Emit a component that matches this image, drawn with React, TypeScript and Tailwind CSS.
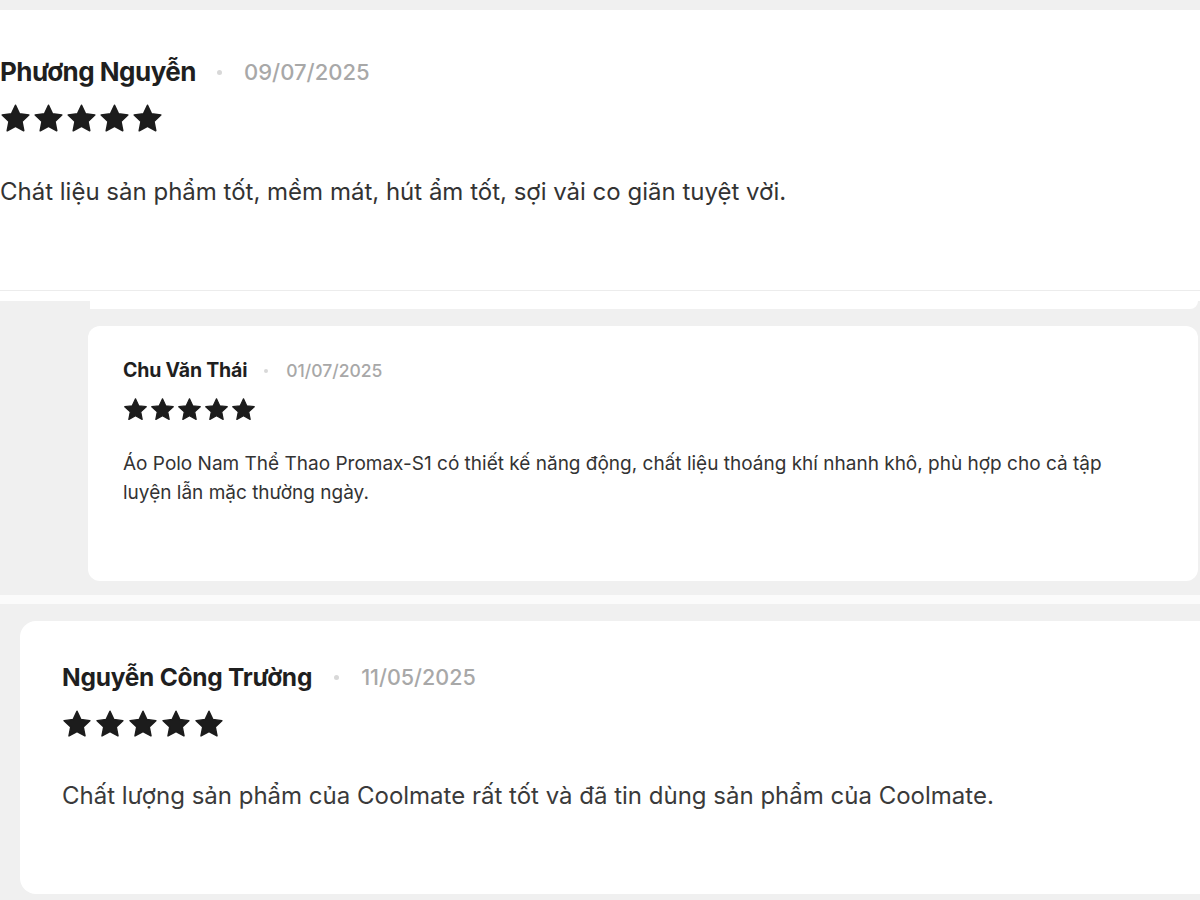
import React from "react";

const Star = ({ size }: { size: number }) => (
  <svg width={size} height={size} viewBox="0 0 24 24" className="shrink-0">
    <path
      d="M12 1.8l3.1 6.6 7.2.9-5.3 5 1.4 7.2L12 18l-6.4 3.5L7 14.3l-5.3-5 7.2-.9z"
      fill="#1c1c1c"
      stroke="#1c1c1c"
      strokeWidth="1.2"
      strokeLinejoin="round"
    />
  </svg>
);

const Stars = ({ size, gap }: { size: number; gap: string }) => (
  <div className={`flex ${gap}`}>
    {[0, 1, 2, 3, 4].map((i) => (
      <Star key={i} size={size} />
    ))}
  </div>
);

export default function App() {
  return (
    <div
      className="w-[1200px] h-[900px] overflow-hidden bg-[#f0f0f0] flex flex-col pt-[10px]"
      style={{ fontFamily: "Inter, 'Noto Sans', sans-serif" }}
    >
      {/* Card 1 */}
      <div className="h-[281px] shrink-0 bg-white border-b border-[#ececec] flex flex-col pt-[49px]">
        <div className="flex items-center">
          <span className="text-[26px] font-bold tracking-[-0.02em] text-[#1f1f1f] leading-none">
            Phương Nguyễn
          </span>
          <span className="w-[5px] h-[5px] rounded-full bg-[#d8d8d8] ml-[21px] mr-[22px]" />
          <span className="text-[22px] font-medium text-[#a8a8a8] leading-none">
            09/07/2025
          </span>
        </div>
        <div className="mt-[18px]">
          <Stars size={31} gap="gap-[2px]" />
        </div>
        <p className="mt-[46px] text-[24px] text-[#333] leading-none">
          Chát liệu sản phẩm tốt, mềm mát, hút ẩm tốt, sợi vải co giãn tuyệt vời.
        </p>
      </div>
      <div className="h-[10px] shrink-0 bg-white" />
      <div className="h-[8px] shrink-0 flex">
        <div className="w-[90px] bg-[#f0f0f0]" />
        <div className="flex-1 bg-white rounded-br-[12px] mr-[2px]" />
      </div>

      {/* Card 2 */}
      <div className="mt-[17px] ml-[88px] mr-[2px] h-[255px] shrink-0 bg-white rounded-[12px] pl-[35px] pr-[68px] pt-[35px]">
        <div className="flex items-center">
          <span className="text-[19.5px] font-bold tracking-[-0.01em] text-[#1f1f1f] leading-none">
            Chu Văn Thái
          </span>
          <span className="w-[4px] h-[4px] rounded-full bg-[#d8d8d8] ml-[17px] mr-[18px]" />
          <span className="text-[17.5px] font-medium text-[#a8a8a8] leading-none">
            01/07/2025
          </span>
        </div>
        <div className="mt-[16px]">
          <Stars size={25} gap="gap-[2px]" />
        </div>
        <p className="mt-[27px] text-[19px] text-[#333] leading-[29px]">
          Áo Polo Nam Thể Thao Promax-S1 có thiết kế năng động, chất liệu thoáng khí nhanh khô, phù hợp cho cả tập luyện lẫn mặc thường ngày.
        </p>
      </div>

      <div className="h-[14px] shrink-0" />
      <div className="h-[9px] shrink-0 bg-[#fbfbfb]" />
      <div className="h-[17px] shrink-0" />

      {/* Card 3 */}
      <div className="ml-[20px] h-[273px] shrink-0 bg-white rounded-l-[16px] pl-[42px] pt-[44px]">
        <div className="flex items-center">
          <span className="text-[24.5px] font-bold tracking-[-0.01em] text-[#1f1f1f] leading-none">
            Nguyễn Công Trường
          </span>
          <span className="w-[5px] h-[5px] rounded-full bg-[#d8d8d8] ml-[22px] mr-[22px]" />
          <span className="text-[21.5px] font-medium text-[#a8a8a8] leading-none">
            11/05/2025
          </span>
        </div>
        <div className="mt-[19px]">
          <Stars size={30} gap="gap-[3px]" />
        </div>
        <p className="mt-[45px] text-[24px] text-[#3a3a3a] leading-none">
          Chất lượng sản phẩm của Coolmate rất tốt và đã tin dùng sản phẩm của Coolmate.
        </p>
      </div>
    </div>
  );
}
